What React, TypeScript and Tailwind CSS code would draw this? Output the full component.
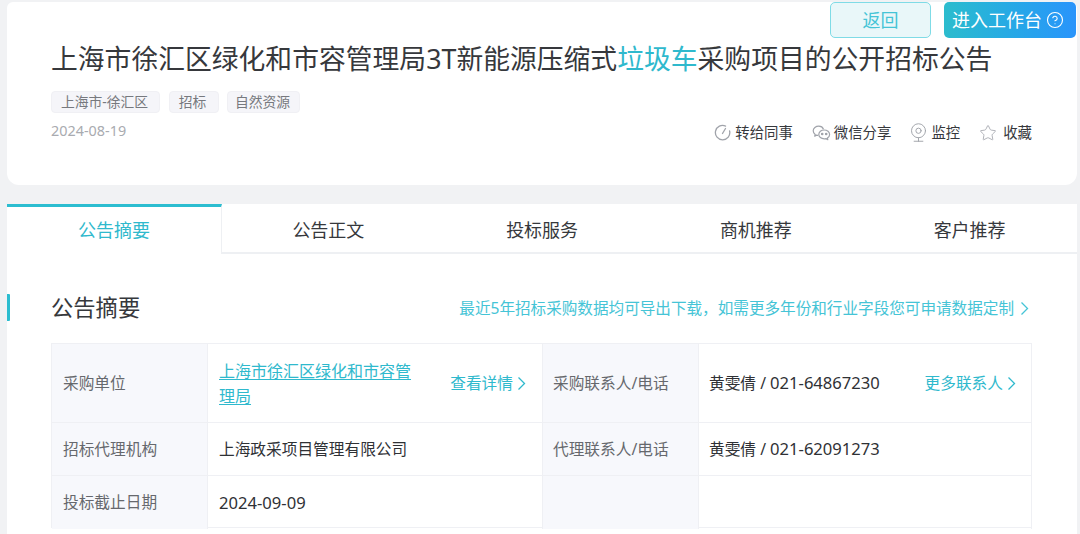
import { CircleHelp, Star, Webcam } from "lucide-react";

const FONT = "font-['Noto_Sans','Noto_Sans_CJK_SC',sans-serif]";

function Chevron({ className = "" }: { className?: string }) {
  return (
    <svg width="9" height="15" viewBox="0 0 9 15" fill="none" stroke="currentColor" strokeWidth="1.3" className={className}>
      <path d="M1.5 1.5 7.5 7.5 1.5 13.5" />
    </svg>
  );
}

function ForwardIcon() {
  return (
    <svg width="17" height="17" viewBox="0 0 17 17" fill="none" stroke="#a0a3aa" strokeWidth="1.3" strokeLinecap="round">
      <path d="M11.6 2.1A7.2 7.2 0 1 0 15.6 7" />
      <path d="M8.5 9.5 11.5 4.5" />
    </svg>
  );
}

function ChatIcon() {
  return (
    <svg width="19" height="16" viewBox="0 0 19 16" fill="none" stroke="#a0a3aa" strokeWidth="1.2" strokeLinejoin="round">
      <path d="M11.5 4.2C10.8 2.4 9 1.2 6.8 1.2 3.8 1.2 1.2 3.2 1.2 5.8c0 1.5.8 2.7 2 3.6l-.5 1.7 2-1c.5.1 1 .2 1.5.2" />
      <path d="M12.2 5c-3 0-5.4 2-5.4 4.4s2.4 4.4 5.4 4.4c.6 0 1.2-.1 1.7-.2l1.9 1-.4-1.6c1.3-.8 2.2-2.1 2.2-3.6C17.6 7 15.2 5 12.2 5Z" />
      <circle cx="10.2" cy="9" r=".7" fill="#a0a3aa" />
      <circle cx="14.2" cy="9" r=".7" fill="#a0a3aa" />
    </svg>
  );
}

function Action({ icon, label, gap }: { icon: React.ReactNode; label: string; gap: string }) {
  return (
    <div className={`flex items-center ${gap}`}>
      {icon}
      <span className="text-[14.4px] leading-5 text-[#36383c]">{label}</span>
    </div>
  );
}

function Label({ children, bottom = true, shift = false }: { children?: React.ReactNode; bottom?: boolean; shift?: boolean }) {
  return (
    <div className={`flex items-center bg-[#f7f8fc] border-r border-[#eff0f4] pt-[1px] text-[15.7px] text-[#66686d] ${shift ? "pl-[10px]" : "pl-[11px]"} ${bottom ? "border-b" : ""}`}>
      {children}
    </div>
  );
}

function Value({ children, bottom = true, shift = false }: { children?: React.ReactNode; bottom?: boolean; shift?: boolean }) {
  return (
    <div className={`flex items-center border-r border-[#eff0f4] pt-[1px] text-[15.7px] text-[#2f3135] ${shift ? "pl-[10px]" : "pl-[11px]"} ${bottom ? "border-b" : ""}`}>
      {children}
    </div>
  );
}

function More({ label }: { label: string }) {
  return (
    <span className="flex items-center whitespace-nowrap text-[15.7px] text-[#2fb9cd]">
      {label}
      <Chevron className="ml-[4px]" />
    </span>
  );
}

function Num({ children }: { children: React.ReactNode }) {
  return <span className="text-[16.6px]">{children}</span>;
}

const TAGS = [
  { text: "上海市-徐汇区", width: "w-[109px]" },
  { text: "招标", width: "w-[50px]" },
  { text: "自然资源", width: "w-[73px]" },
];

export default function App() {
  const tabs = ["公告摘要", "公告正文", "投标服务", "商机推荐", "客户推荐"];
  return (
    <div className={`relative h-[534px] w-[1080px] overflow-hidden bg-[#f1f2f4] pl-[7px] pr-[3px] pt-[2px] ${FONT}`}>
      <div className="absolute right-[4px] top-[2px] flex gap-[13px]">
        <button className="h-[36px] w-[101px] rounded-[5px] border border-[#7fdbe6] bg-[#e9f7f9] text-[18px] text-[#45c4d6]">返回</button>
        <button className="flex h-[36px] w-[132px] items-center justify-center gap-[4px] rounded-[5px] bg-gradient-to-r from-[#2cbccd] to-[#2a94fb] pr-[4px] text-[18px] text-white">
          进入工作台
          <CircleHelp size={18} strokeWidth={1.5} />
        </button>
      </div>

      <section className="h-[183px] rounded-b-xl rounded-t-md bg-white pl-[44px] pr-[45px] pt-[36px]">
        <h1 className="whitespace-nowrap text-[26.8px] font-normal leading-[42px] text-[#36383c]">
          上海市徐汇区绿化和市容管理局3T新能源压缩式<span className="text-[#2fb9cd]">垃圾车</span>采购项目的公开招标公告
        </h1>
        <div className="mt-[11px] flex gap-[8.5px]">
          {TAGS.map((t) => (
            <span key={t.text} className={`flex h-[22px] items-center justify-center rounded-[4px] border border-[#f0f0f4] bg-[#f5f5f9] pr-[2px] text-[13.8px] text-[#77797e] ${t.width}`}>{t.text}</span>
          ))}
        </div>
        <div className="mt-[7px] flex items-start justify-between">
          <span className="mt-[1px] text-[14.4px] leading-5 text-[#a9abb0]">2024-08-19</span>
          <div className="mt-[2px] flex items-center gap-[19px]">
            <Action gap="gap-[4px]" icon={<ForwardIcon />} label="转给同事" />
            <Action gap="gap-[3px]" icon={<ChatIcon />} label="微信分享" />
            <Action gap="gap-[2px]" icon={<Webcam size={21} strokeWidth={1.1} color="#a0a3aa" className="-ml-[2px]" />} label="监控" />
            <Action gap="gap-[6px]" icon={<Star size={18} strokeWidth={1.1} color="#a0a3aa" />} label="收藏" />
          </div>
        </div>
      </section>

      <nav className="mt-[19px] grid h-[50px] grid-cols-[215px_repeat(4,1fr)] bg-white">
        {tabs.map((t, i) =>
          i === 0 ? (
            <div key={t} className="flex items-center justify-center border-r border-t-[3px] border-[#eef0f3] border-t-[#2cbdd0] text-[18px] text-[#2fb9cd]">{t}</div>
          ) : (
            <div key={t} className="flex items-center justify-center border-b-2 border-[#eef0f3] pr-[1px] pt-[5px] text-[18px] text-[#36383c]">{t}</div>
          ),
        )}
      </nav>

      <main className="h-[300px] bg-white pr-[45px]">
        <div className="flex h-[89px] items-start">
          <div className="mt-[40px] h-[27px] w-[3px] rounded-r-[1px] bg-[#2cbdd0]" />
          <div className="ml-[41px] flex flex-1 items-center justify-between pt-[37px]">
            <h2 className="text-[22.3px] font-normal leading-[34px] text-[#36383c]">公告摘要</h2>
            <span className="mr-[3px] mt-[1px] flex items-center text-[15.6px] text-[#45c4d6]">
              最近5年招标采购数据均可导出下载，如需更多年份和行业字段您可申请数据定制
              <Chevron className="ml-[6px]" />
            </span>
          </div>
        </div>

        <div className="ml-[44px] grid h-[185px] grid-cols-[156px_335px_156px_333px] grid-rows-[79px_53px_53px] border-b border-l border-t border-[#eff0f4]">
          <Label>采购单位</Label>
          <Value>
            <div className="flex w-full items-center justify-between pr-[16px]">
              <span className="w-[200px] text-[16px] leading-[25px] text-[#2fb9cd] underline underline-offset-2">上海市徐汇区绿化和市容管理局</span>
              <More label="查看详情" />
            </div>
          </Value>
          <Label shift>采购联系人/电话</Label>
          <Value shift>
            <div className="flex w-full items-center justify-between pr-[15px]">
              <span className="whitespace-nowrap">黄雯倩 / <Num>021-64867230</Num></span>
              <More label="更多联系人" />
            </div>
          </Value>

          <Label>招标代理机构</Label>
          <Value>上海政采项目管理有限公司</Value>
          <Label shift>代理联系人/电话</Label>
          <Value shift><span>黄雯倩 / <Num>021-62091273</Num></span></Value>

          <Label bottom={false}>投标截止日期</Label>
          <Value bottom={false}><Num>2024-09-09</Num></Value>
          <Label bottom={false} shift />
          <Value bottom={false} shift />
        </div>
      </main>
    </div>
  );
}
